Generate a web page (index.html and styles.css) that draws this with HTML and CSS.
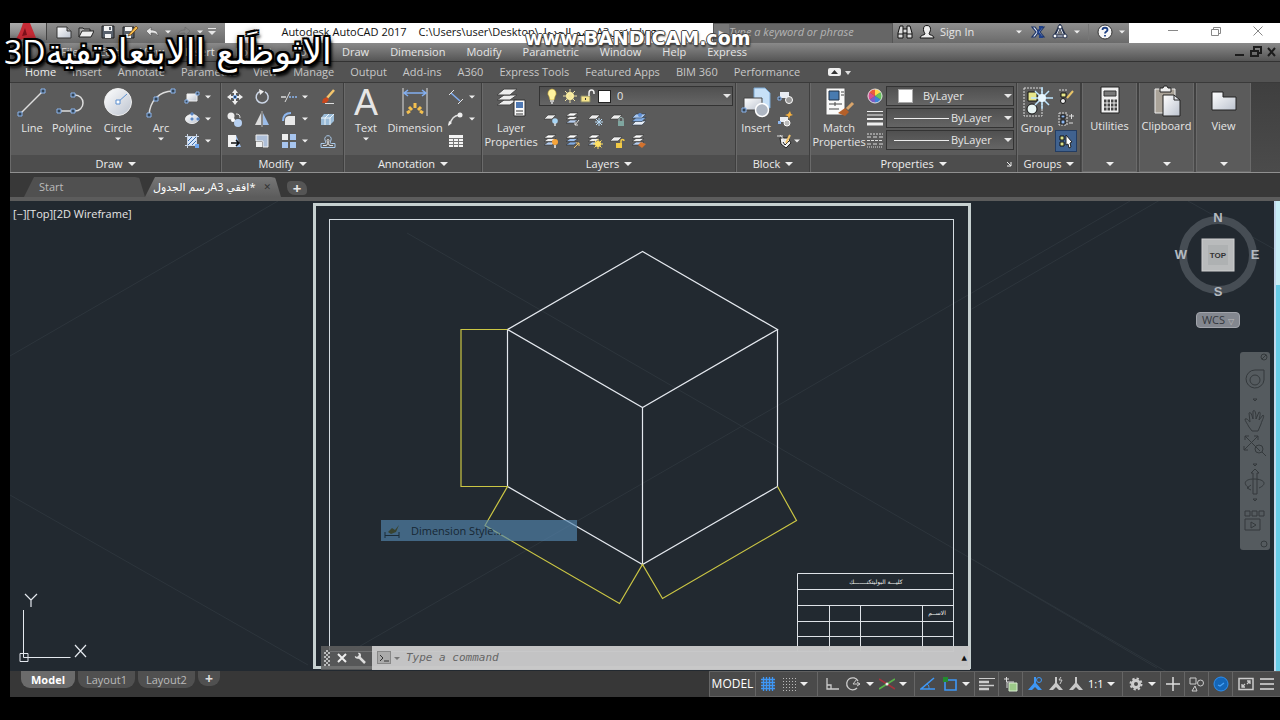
FILE: index.html
```html
<!DOCTYPE html>
<html lang="en">
<head>
<meta charset="utf-8">
<title>Autodesk AutoCAD 2017</title>
<link rel="stylesheet" href="styles.css">
</head>
<body>
<svg class="defs" aria-hidden="true">
<defs>
<linearGradient id="pale" x1="0" y1="0" x2="1" y2="1"><stop offset="0" stop-color="#fff"/><stop offset="1" stop-color="#bcc3cf"/></linearGradient>
</defs>
<symbol id="down" viewBox="0 0 8 8"><path d="M0 2h8L4 6z" fill="currentColor"/></symbol>
<!-- quick access -->
<symbol id="new" viewBox="0 0 16 16"><path d="M1 3h10l4 4v7H1z" fill="url(#pale)" stroke="#333"/><path d="M11 3v4h4" fill="#999" stroke="#333"/></symbol>
<symbol id="open" viewBox="0 0 16 16"><path d="M1 13V4h4l1 1h6v3" fill="#aaa" stroke="#222"/><path d="M1 13l3-6h12l-3 6z" fill="#eee" stroke="#222"/></symbol>
<symbol id="save" viewBox="0 0 16 16"><path d="M2 2h12v12H2z" fill="#59616c" stroke="#222"/><path d="M4 2h8v5H4zM5 10h6v4H5z" fill="#f3f3f3"/><path d="M9 3h2v3H9z" fill="#59616c"/></symbol>
<symbol id="saveas" viewBox="0 0 16 16"><path d="M1 3h11v11H1z" fill="#59616c" stroke="#222"/><path d="M3 3h7v4H3zM4 10h5v4H4z" fill="#f3f3f3"/><path d="M7 10l7-8 2 2-7 7-3 1z" fill="#f2b94a" stroke="#603a12" stroke-width=".7"/></symbol>
<symbol id="undo" viewBox="0 0 16 16"><path d="M2 7l5-4v3c5 0 7 2 7 6-2-3-4-3-7-3v3z" fill="#e8e8e8" stroke="#555" stroke-width=".6"/></symbol>
<symbol id="redo" viewBox="0 0 16 16"><path d="M14 7L9 3v3c-5 0-7 2-7 6 2-3 4-3 7-3v3z" fill="#858585" stroke="#666" stroke-width=".6"/></symbol>
<symbol id="more" viewBox="0 0 8 8"><path d="M0 0h8v1H0zM0 3h8L4 7z" fill="currentColor"/></symbol>
<!-- title bar -->
<symbol id="bino" viewBox="0 0 16 16"><path d="M3 2h3v3h4V2h3l2 7v5h-5V9H6v5H1V9z" fill="#ddd" stroke="#111"/><path d="M6 5v4M10 5v4M1 10h5M10 10h5" stroke="#111"/></symbol>
<symbol id="user" viewBox="0 0 16 16"><path d="M8 1.500c3 0 3.500 2 3.500 4S10 9 10 10c0 1 5 1 5 4H1c0-3 5-3 5-4 0-1-1.500-2-1.500-4.500S5 1.500 8 1.500z" fill="#eee" stroke="#111"/></symbol>
<symbol id="exch" viewBox="0 0 16 16"><path d="M2 3h3l3 4 3-4h3l-4 5 4 5h-3L8 9l-3 4H2l4-5z" fill="#dfe8f5" stroke="#1d3468" stroke-width="1.200"/><path d="M9 3h4M9 13h4M12 3L8 8l4 5" fill="none" stroke="#1d3f8a" stroke-width="1.800"/></symbol>
<symbol id="a360" viewBox="0 0 16 16"><path d="M8 2l5 10H3z" fill="none" stroke="#24314e" stroke-width="3"/><path d="M8 3l4 9H4z" fill="none" stroke="#e8ecf4"/><circle cx="8" cy="3" r="2" fill="#fff" stroke="#24314e"/><circle cx="3" cy="12" r="2" fill="#fff" stroke="#24314e"/><circle cx="13" cy="12" r="2" fill="#fff" stroke="#24314e"/></symbol>
<symbol id="help" viewBox="0 0 16 16"><circle cx="8" cy="8" r="7" fill="#f6f6f6" stroke="#333"/><path d="M5.500 6c0-3 5-3 5 0 0 1.500-2.500 1.500-2.500 3.500M8 11v1.500" fill="none" stroke="#1d3f82" stroke-width="1.800"/></symbol>
<!-- draw -->
<symbol id="line" viewBox="0 0 32 32"><path d="M4 28L27 5" stroke="#ddd" stroke-width="1.500"/><path d="M2 26h4v4H2zM25 3h4v4h-4z" fill="#345" stroke="#8db6ee"/></symbol>
<symbol id="pline" viewBox="0 0 32 32"><path d="M3 25h16a8 8 0 0 0 0-16" fill="none" stroke="#ddd" stroke-width="1.500"/><path d="M1 23h4v4H1zM15 23h4v4h-4zM15 7h4v4h-4z" fill="#345" stroke="#8db6ee"/></symbol>
<symbol id="circle" viewBox="0 0 32 32"><circle cx="16" cy="16" r="13.500" fill="url(#pale)" stroke="#eee"/><path d="M16 16l9-8" stroke="#5a8fd0"/><path d="M14 14h4v4h-4z" fill="#fff" stroke="#5a8fd0"/></symbol>
<symbol id="arc" viewBox="0 0 32 32"><path d="M4 29C5 15 14 5 28 5" fill="none" stroke="#ddd" stroke-width="1.500"/><path d="M2 27h4v4H2zM9 11h4v4H9zM26 3h4v4h-4z" fill="#345" stroke="#8db6ee"/></symbol>
<symbol id="rect" viewBox="0 0 16 16"><path d="M3 5h10v7H3z" fill="url(#pale)" stroke="#eee"/><path d="M1 11h3v3H1zM12 3h3v3h-3z" fill="#345" stroke="#8db6ee"/></symbol>
<symbol id="ell" viewBox="0 0 16 16"><ellipse cx="8" cy="8" rx="6.500" ry="4.500" fill="url(#pale)" stroke="#eee"/><path d="M7 7h2v2H7zM13 7h2v2h-2zM7 2h2v2H7z" fill="#345" stroke="#6c9be0"/></symbol>
<symbol id="hatch" viewBox="0 0 16 16"><path d="M4 4h8v8H4z" fill="#d7e6fb"/><path d="M4 8l4-4M4 12l8-8M8 12l4-4" stroke="#3c6fae"/><path d="M1 3.500h14M1 12.500h14M3.500 1v14M12.500 1v14" stroke="#c8d4e4"/><path d="M11 11h4v4h-4z" fill="#6ea6ef"/></symbol>
<!-- modify -->
<symbol id="move" viewBox="0 0 16 16"><path d="M8 0l3 4H9v3h3V5l4 3-4 3V9H9v3h2l-3 4-3-4h2V9H4v2L0 8l4-3v2h3V4H5z" fill="#eee"/><path d="M6.500 6.500h3v3h-3z" fill="#26476e" stroke="#8db6ee"/></symbol>
<symbol id="rotate" viewBox="0 0 16 16"><path d="M6 2.500a6 6 0 1 0 5 .3" fill="none" stroke="#ccd6e6" stroke-width="1.500"/><path d="M5 0l5 2.500L6 6z" fill="#eee"/></symbol>
<symbol id="trim" viewBox="0 0 16 16"><path d="M0 8h5" stroke="#ddd" stroke-width="1.500"/><path d="M8 8h8" stroke="#8db6ee" stroke-width="1.500" stroke-dasharray="2 1"/><path d="M4 13L9 3" stroke="#ddd"/></symbol>
<symbol id="brush" viewBox="0 0 16 16"><path d="M14 1L7 9" stroke="#f3c56c" stroke-width="2.500"/><path d="M3 10l4-2 2 3-3 3H2z" fill="#c9471c"/><path d="M5 14.500h9" stroke="#ddd"/></symbol>
<symbol id="copy" viewBox="0 0 16 16"><circle cx="4" cy="5" r="3.500" fill="#eee"/><circle cx="11" cy="12" r="4" fill="#b7d0f1"/><circle cx="6" cy="9" r="2" fill="#fff"/><path d="M9 3c3 0 4 1 4 4" fill="none" stroke="#ddd"/></symbol>
<symbol id="mirror" viewBox="0 0 16 16"><path d="M7 2v12H1z" fill="#ddd"/><path d="M9 2v12h6z" fill="#9dbde8"/><path d="M8 0v16" stroke="#ddd" stroke-width=".7"/></symbol>
<symbol id="fillet" viewBox="0 0 16 16"><path d="M4 14V9c0-3 2-4 4-4h6v9z" fill="#e8e8e8"/><path d="M2 10c0-5 3-8 8-8" fill="none" stroke="#8db6ee" stroke-width="2"/></symbol>
<symbol id="box" viewBox="0 0 16 16"><path d="M1 7l3-4h10v7l-4 4H1z" fill="#9bbcd8"/><path d="M1 7h9v7M10 7l4-4M5 7v7M5 7l4-4" fill="none" stroke="#edf5fb"/></symbol>
<symbol id="stretch" viewBox="0 0 16 16"><path d="M1 2h8v12H1z" fill="#f2f2f2"/><path d="M9 2l5 12H9z" fill="#9dc0f0"/><path d="M4 10h7M9 7l3 3-3 3" fill="none" stroke="#111" stroke-width="1.500"/></symbol>
<symbol id="scale" viewBox="0 0 16 16"><path d="M2 2h12v12H9V8H2z" fill="#aebfd8" stroke="#eee"/><path d="M2 9h6v5H2z" fill="#eee"/></symbol>
<symbol id="array" viewBox="0 0 16 16"><path d="M1 1h6v6H1z" fill="#eee"/><path d="M9 1h6v6H9zM1 9h6v6H1zM9 9h6v6H9z" fill="#a7c5ef"/></symbol>
<symbol id="offset" viewBox="0 0 16 16"><path d="M1 14.500v-4h3.500c2 0 1-2 .5-3.500a3.200 3.200 0 1 1 6 0c-.5 1.500-1.500 3.500.5 3.500H15v4z" fill="none" stroke="#a9c9ea"/><path d="M3 12.500h3c2 0 1.500-3 1-5a1 1 0 1 1 2 0c-.5 2-1 5 1 5h3" fill="none" stroke="#ddd"/></symbol>
<!-- annotation -->
<symbol id="dim" viewBox="0 0 32 32"><path d="M4 2v28M28 2v28" stroke="#ddd"/><path d="M5 7h22M9 4L5 7l4 3M23 4l4 3-4 3" fill="none" stroke="#82aef0" stroke-width="1.500"/><path d="M8 27l3-2M10 21l3 3M16 17v5M22 21l-3 3M24 27l-3-2" stroke="#f4c04f" stroke-width="3"/></symbol>
<symbol id="dlin" viewBox="0 0 16 16"><path d="M3 4l9 8" stroke="#82aef0" stroke-width="1.500"/><path d="M1 6l5-5M10 15l5-5" stroke="#e5e5e5"/></symbol>
<symbol id="leader" viewBox="0 0 16 16"><path d="M1 14C4 8 5 5 11 4" fill="none" stroke="#ddd" stroke-width="1.500"/><circle cx="12" cy="4" r="2.500" fill="#eee"/><path d="M0 15l1-5 3 2z" fill="#eee"/></symbol>
<symbol id="table" viewBox="0 0 16 16"><path d="M1 2h14v12H1z" fill="#f4f4f4"/><path d="M1 5.500h14M1 8.500h14M1 11.500h14M5.500 5v9M10.500 5v9" stroke="#777"/></symbol>
<!-- layers -->
<symbol id="layers" viewBox="0 0 32 32"><g fill="#eee" stroke="#444"><path d="M2 19l7-5h13l-7 5z"/><path d="M2 14l7-5h13l-7 5z"/><path d="M2 9l7-6h13l-7 6z"/></g><path d="M19 14h11v16H19z" fill="#fafafa" stroke="#333"/><path d="M21 16h7v6h-7z" fill="#4f79b4"/><path d="M21 25h7M21 28h7" stroke="#333"/></symbol>
<symbol id="sheet" viewBox="0 0 16 16"><path d="M1 8l4-4h8l-4 4z" fill="#eee" stroke="#333" stroke-width=".6"/></symbol>
<symbol id="stack" viewBox="0 0 16 16"><g stroke="#333" stroke-width=".6"><path d="M1 12l4-3h8l-4 3z" fill="#b7cff0"/><path d="M1 8.500l4-3h8l-4 3z" fill="#eee"/><path d="M1 5l4-3h8L9 5z" fill="#fff"/></g></symbol>
<symbol id="l1" viewBox="0 0 16 16"><use href="#sheet"/><circle cx="12" cy="10" r="2.800" fill="#a8d5f5"/><path d="M12 12v3" stroke="#ddd" stroke-width="1.500"/></symbol>
<symbol id="l2" viewBox="0 0 16 16"><use href="#stack"/><path d="M14 9l-4 5M10 11v3h3" fill="none" stroke="#ddd"/></symbol>
<symbol id="l3" viewBox="0 0 16 16"><use href="#sheet"/><path d="M12 7v8M8 11h8M9 8l6 6M15 8l-6 6" stroke="#b9dcf7"/></symbol>
<symbol id="l4" viewBox="0 0 16 16"><use href="#sheet"/><path d="M9 10h6v5H9z" fill="#7fa6a0"/><path d="M10 10V8c0-2 4-2 4 0v2" fill="none" stroke="#aac7c2"/></symbol>
<symbol id="l5" viewBox="0 0 16 16"><g stroke="#2b3a4d" stroke-width=".6"><path d="M1 14l4-4h10l-4 4z" fill="#e8eef6"/><path d="M1 10.500l4-4h10l-4 4z" fill="#82abe0"/><path d="M1 7l4-4h10l-4 4z" fill="#a9c8f0"/></g><circle cx="9" cy="4" r="2" fill="#5f8fd6"/></symbol>
<symbol id="l6" viewBox="0 0 16 16"><use href="#stack"/><circle cx="12" cy="9" r="3" fill="#f7a53b"/><path d="M12 12v3" stroke="#eee" stroke-width="1.500"/></symbol>
<symbol id="l7" viewBox="0 0 16 16"><g stroke="#333" stroke-width=".6"><path d="M1 12l4-3h8l-4 3z" fill="#82abe0"/><path d="M1 8.500l4-3h8l-4 3z" fill="#9dbfec"/><path d="M1 5l4-3h8L9 5z" fill="#fff"/></g><path d="M9 15l5-5M11 10h3v3" fill="none" stroke="#f3c56a"/></symbol>
<symbol id="l8" viewBox="0 0 16 16"><use href="#stack"/><circle cx="11" cy="11" r="3" fill="#ffe063"/><path d="M11 6v10M6 11h10M7.500 7.500l7 7M14.500 7.500l-7 7" stroke="#ffe063"/></symbol>
<symbol id="l9" viewBox="0 0 16 16"><use href="#sheet"/><path d="M7 10h6v5H7z" fill="#f1c945"/><path d="M12 10V8c0-2 3-2 3 0" fill="none" stroke="#f1c945" stroke-width="1.500"/></symbol>
<symbol id="l10" viewBox="0 0 16 16"><use href="#stack"/><path d="M7 12l3-3 5 2-4 4z" fill="#d2722e"/></symbol>
<symbol id="bulb" viewBox="0 0 16 16"><path d="M8 1a4.500 4.500 0 0 1 3 7.500L10 12H6L5 8.500A4.500 4.500 0 0 1 8 1z" fill="#fff3a0" stroke="#caa93a" stroke-width=".6"/><path d="M6 13h4M7 15h2" stroke="#ddd" stroke-width="1.500"/></symbol>
<symbol id="sun" viewBox="0 0 16 16"><circle cx="8" cy="8" r="4" fill="#fff3a0"/><path d="M8 1v14M1 8h14M3 3l10 10M13 3L3 13" stroke="#efe2a2"/></symbol>
<symbol id="unlock" viewBox="0 0 16 16"><path d="M1 8h9v6H1z" fill="#f6e48a" stroke="#886"/><path d="M9 8V5c0-4 5-4 5 0v1" fill="none" stroke="#eee" stroke-width="1.500"/><path d="M5 10h1v2H5z" fill="#333"/></symbol>
<!-- block, properties -->
<symbol id="insert" viewBox="0 0 32 32"><path d="M14 2h11l5 5v15H14z" fill="#c7e0f7" stroke="#7ca9d4"/><path d="M4 12h18v12H4z" fill="url(#pale)" stroke="#444"/><circle cx="22" cy="24" r="6.500" fill="#aeb6c2" stroke="#fff" stroke-width="1.500"/><path d="M2 22h4v4H2z" fill="#345" stroke="#8db6ee"/></symbol>
<symbol id="b1" viewBox="0 0 16 16"><path d="M3 3h9v6H3z" fill="#e8ecf2"/><circle cx="12" cy="11" r="3.500" fill="#999" stroke="#fff"/><path d="M1 8h3v3H1z" fill="#345" stroke="#8db6ee"/></symbol>
<symbol id="b2" viewBox="0 0 16 16"><path d="M3 6h8v5H3z" fill="#e8ecf2"/><circle cx="10" cy="12" r="3" fill="#bbb" stroke="#fff"/><path d="M1 10h3v3H1z" fill="#8db6ee"/><path d="M13 0l1 3 2 1-3 1-1 3-1-3-3-1 3-1z" fill="#f7b23f"/></symbol>
<symbol id="b3" viewBox="0 0 16 16"><path d="M3 5h8l3 5-5 5-5-4z" fill="#eee" stroke="#222"/><path d="M0 3h6M3 2l5 6" stroke="#ddd"/><path d="M6 9l2 3 4-4" fill="none" stroke="#222"/><path d="M9 10l4-8" stroke="#f2c46c" stroke-width="2"/></symbol>
<symbol id="match" viewBox="0 0 32 32"><path d="M3 2h19v27H3z" fill="#fafafa" stroke="#555"/><path d="M6 5h10v9H6z" fill="#487bb0" stroke="#234"/><path d="M18 6h3M18 9h3M6 18h13M6 23h10M12 16v4" stroke="#444"/><path d="M30 17l-6 6" stroke="#d9a56b" stroke-width="3"/><path d="M15 27l7-5 4 4-4 4z" fill="#b4602a"/></symbol>
<symbol id="wheel" viewBox="0 0 16 16"><path d="M8 8V1A7 7 0 0 1 14 4z" fill="#ffd84a"/><path d="M8 8l6-4a7 7 0 0 1 0 8z" fill="#67c45c"/><path d="M8 8l6 4a7 7 0 0 1-6 3z" fill="#3d83d8"/><path d="M8 8v7a7 7 0 0 1-6-3z" fill="#7a5dc7"/><path d="M8 8l-6 4a7 7 0 0 1 0-8z" fill="#d84e90"/><path d="M8 8L2 4a7 7 0 0 1 6-3z" fill="#ec5a3d"/><circle cx="8" cy="8" r="7" fill="none" stroke="#ddd"/></symbol>
<symbol id="weights" viewBox="0 0 16 16"><path d="M0 1.500h16M0 5h16" stroke="#eee"/><path d="M0 9h16" stroke="#eee" stroke-width="2"/><path d="M0 14h16" stroke="#eee" stroke-width="3"/></symbol>
<symbol id="types" viewBox="0 0 16 16"><path d="M0 2h16" stroke="#ddd" stroke-dasharray="2 1"/><path d="M0 5h16M0 12h16" stroke="#ddd" stroke-dasharray="4 2"/><path d="M0 8.500h16" stroke="#ddd" stroke-dasharray="3 1"/><path d="M0 15h16" stroke="#ddd" stroke-dasharray="1 1"/></symbol>
<!-- groups -->
<symbol id="group" viewBox="0 0 32 32"><path d="M3 2h18v28H3z" fill="none" stroke="#ddd" stroke-dasharray="2 1"/><path d="M7 6h9v9H7z" fill="#e6e68a" stroke="#111"/><circle cx="11" cy="23" r="5" fill="#e9f5f4" stroke="#111"/><path d="M21 1v22M10 12h22M14 5l14 14M28 5L14 19" stroke="#bfe6ff" stroke-width="1.500"/><circle cx="21" cy="12" r="4" fill="#e8f7ff"/></symbol>
<symbol id="g1" viewBox="0 0 16 16"><path d="M1 1h9" stroke="#ddd" stroke-dasharray="2 1"/><path d="M3 4h5v4H3z" fill="#e6e68a" stroke="#111"/><circle cx="5" cy="12" r="2.500" fill="#eee" stroke="#111"/><path d="M15 2L9 9" stroke="#e8c468" stroke-width="2"/></symbol>
<symbol id="g2" viewBox="0 0 16 16"><path d="M1 2h8v12H1z" fill="none" stroke="#ddd" stroke-dasharray="2 1"/><path d="M3 4h4v3H3zM3 9h4v4H3z" fill="#8db6ee" stroke="#111"/><path d="M11 5h5M13.500 3v5M11 12h4" stroke="#ddd"/></symbol>
<symbol id="g3" viewBox="0 0 16 16"><path d="M2 3h4v4H2zM2 9h4v4H2z" fill="#d8e08c" stroke="#111"/><path d="M8 2l6 7-2 1 1 4-2 1-1-4-2 1z" fill="#fff" stroke="#222"/></symbol>
<symbol id="calc" viewBox="0 0 32 32"><path d="M7 2h18v26H7z" fill="#f0f0f0" stroke="#222"/><path d="M10 6h12v5H10z" fill="#777" stroke="#333"/><path d="M10 16h13M10 20h13M10 24h13" stroke="#444" stroke-width="3" stroke-dasharray="2.500 1"/></symbol>
<symbol id="clip" viewBox="0 0 32 32"><path d="M4 4h20v24H4z" fill="#aaa398" stroke="#eee"/><path d="M9 3h3l1-2h3l1 2h3v4H9z" fill="#eee" stroke="#222"/><path d="M12 10h11l6 5v16H12z" fill="url(#pale)" stroke="#222"/><path d="M23 10v5h6" fill="none" stroke="#222"/></symbol>
<symbol id="view" viewBox="0 0 32 32"><path d="M4 7h11v5h13v13H4z" fill="url(#pale)" stroke="#222"/></symbol>
<!-- status bar -->
<symbol id="grid" viewBox="0 0 16 16"><path d="M1 3.500h14M1 6.500h14M1 9.500h14M1 12.500h14M3.500 1v14M6.500 1v14M9.500 1v14M12.500 1v14" stroke="#3e97f5" stroke-width="1.300"/></symbol>
<symbol id="dots" viewBox="0 0 16 16"><path d="M2 2.500h13M2 5.500h13M2 8.500h13M2 11.500h13M2 14.500h13" stroke="#bbb" stroke-dasharray="1 2"/></symbol>
<symbol id="ortho" viewBox="0 0 16 16"><path d="M3 2v11h12M3 9h4v4" fill="none" stroke="#ccc" stroke-width="1.300"/></symbol>
<symbol id="polar" viewBox="0 0 16 16"><path d="M12 12a6 6 0 1 1 1-7" fill="none" stroke="#ccc" stroke-width="1.300"/><path d="M8 8h7M8 8l4-5M12 6l3 2-3 2" fill="none" stroke="#ccc"/></symbol>
<symbol id="iso" viewBox="0 0 16 16"><path d="M0 3l16 10" stroke="#a3333c" stroke-width="1.600"/><path d="M0 13L16 3" stroke="#58b247" stroke-width="1.600"/><circle cx="8" cy="8" r="1.500" fill="#eee"/></symbol>
<symbol id="track" viewBox="0 0 16 16"><path d="M14 2L1 13h14" fill="none" stroke="#3e97f5" stroke-width="1.600"/><path d="M7 8c2 1 2 3 2 5" stroke="#3e97f5" fill="none"/></symbol>
<symbol id="snap" viewBox="0 0 16 16"><path d="M3 4h11v10H3z" fill="none" stroke="#3e97f5" stroke-width="1.600"/><path d="M1 1h5v5H1z" fill="#238c2e"/></symbol>
<symbol id="lwt" viewBox="0 0 16 16"><path d="M0 2.500h16" stroke="#ccc"/><path d="M0 6h10M0 13h10" stroke="#ccc" stroke-width="2.500"/><path d="M0 9.500h15" stroke="#ccc" stroke-width="1.500"/></symbol>
<symbol id="cycle" viewBox="0 0 16 16"><path d="M6 7h8v8H6z" fill="#9cc989" stroke="#d8ecd0"/><path d="M1 3h5M3.500 1v5M4 12V6h7" stroke="#ddd" fill="none"/></symbol>
<symbol id="anno" viewBox="0 0 16 16"><path d="M7 1h2v6l6 7H11l-3-3-3 3H1l6-7z" fill="currentColor"/></symbol>
<symbol id="anno1" viewBox="0 0 16 16"><use href="#anno"/><circle cx="12" cy="4" r="2.500" fill="none" stroke="currentColor"/></symbol>
<symbol id="anno2" viewBox="0 0 16 16"><use href="#anno"/><path d="M13 1l-2 3h3l-2 4" fill="none" stroke="currentColor"/></symbol>
<symbol id="gear" viewBox="0 0 16 16"><circle cx="8" cy="8" r="3.500" fill="none" stroke="#ccc" stroke-width="3"/><circle cx="8" cy="8" r="5.500" fill="none" stroke="#ccc" stroke-width="2" stroke-dasharray="2.300 2"/></symbol>
<symbol id="plus" viewBox="0 0 16 16"><path d="M8 1v14M1 8h14" stroke="#ddd" stroke-width="1.500"/></symbol>
<symbol id="shapes" viewBox="0 0 16 16"><path d="M1 2h6v6H1zM8 15H3l3-5z" fill="none" stroke="#ccc"/><circle cx="11.500" cy="7" r="3" fill="none" stroke="#ccc"/></symbol>
<symbol id="accel" viewBox="0 0 16 16"><circle cx="8" cy="8" r="7" fill="#1466b8" stroke="#2c8ef0"/><path d="M5 9l2 1 4-3" fill="none" stroke="#49a5fa" stroke-width="1.200"/></symbol>
<symbol id="full" viewBox="0 0 16 16"><path d="M1 2.500h14v11H1z" fill="none" stroke="#ccc" stroke-width="1.500"/><path d="M4 11l3-3M4 8v3h3M9 8l3-3M9 5h3v3" fill="none" stroke="#ccc" stroke-width="1.300"/></symbol>
<symbol id="burger" viewBox="0 0 16 16"><path d="M1 3h14M1 8h14M1 13h14" stroke="#ddd" stroke-width="1.500"/></symbol>
</svg>

<div class="app">
<header class="titlebar">
  <div class="quick">
    <button class="logo" aria-label="Application menu"><svg viewBox="0 0 32 20"><path d="M3 20C9 13 11 6 13 0h7l8 20h-7l-2-5-7 1-3 4z" fill="#c62a35"/><path d="M12 13l5-1-2-7z" fill="#7c111b"/></svg></button>
    <button aria-label="New"><svg class="s"><use href="#new"/></svg></button>
    <button aria-label="Open"><svg class="s"><use href="#open"/></svg></button>
    <button aria-label="Save"><svg class="s"><use href="#save"/></svg></button>
    <button aria-label="Save as"><svg class="s"><use href="#saveas"/></svg></button>
    <button aria-label="Undo"><svg class="s"><use href="#undo"/></svg></button>
    <svg class="d"><use href="#down"/></svg>
    <button aria-label="Redo"><svg class="s"><use href="#redo"/></svg></button>
    <svg class="d"><use href="#down"/></svg>
    <button aria-label="Customize"><svg class="m"><use href="#more"/></svg></button>
  </div>
  <div class="doc-title"><span>Autodesk AutoCAD 2017</span><span>C:\Users\user\Desktop\رسم الجدولA3افقي.dwg</span></div>
  <div class="search"><button aria-label="Expand search">▸</button><input type="text" aria-label="Search" placeholder="Type a keyword or phrase"></div>
  <div class="account">
    <button aria-label="Find"><svg class="s"><use href="#bino"/></svg></button>
    <button class="sign"><svg class="s"><use href="#user"/></svg>Sign In<svg class="d"><use href="#down"/></svg></button>
    <button aria-label="Exchange"><svg class="s"><use href="#exch"/></svg></button>
    <button class="pair" aria-label="A360"><svg class="s"><use href="#a360"/></svg><svg class="d"><use href="#down"/></svg></button>
    <button class="pair helpb" aria-label="Help"><svg class="s"><use href="#help"/></svg><svg class="d"><use href="#down"/></svg></button>
  </div>
  <div class="winctl">
    <button aria-label="Minimize"><svg viewBox="0 0 12 12"><path d="M1 5.500h10"/></svg></button>
    <button aria-label="Restore"><svg viewBox="0 0 12 12"><path d="M1.500 4.500h7v6h-7zM3.500 4.500v-2h7v6h-2"/></svg></button>
    <button aria-label="Close"><svg viewBox="0 0 12 12"><path d="M1.500 1.500l9 9M10.500 1.500l-9 9"/></svg></button>
  </div>
</header>

<nav class="menubar">
  <button>File</button><button>Edit</button><button>View</button><button>Insert</button><button>Format</button><button>Tools</button><button>Draw</button><button>Dimension</button><button>Modify</button><button>Parametric</button><button>Window</button><button>Help</button><button>Express</button>
  <div class="docctl">
    <button aria-label="Minimize drawing"><svg viewBox="0 0 12 12"><path d="M1 9h9"/></svg></button>
    <button aria-label="Restore drawing"><svg viewBox="0 0 12 12"><path d="M1 5h7v5H1zM4 4V1h7v6H9"/></svg></button>
    <button aria-label="Close drawing"><svg viewBox="0 0 12 12"><path d="M2 2l7 8M9 2l-7 8"/></svg></button>
  </div>
</nav>

<nav class="tabs">
  <button class="on">Home</button><button>Insert</button><button>Annotate</button><button>Parametric</button><button>View</button><button>Manage</button><button>Output</button><button>Add-ins</button><button>A360</button><button>Express Tools</button><button>Featured Apps</button><button>BIM 360</button><button>Performance</button>
  <button class="collapse" aria-label="Minimize ribbon"><svg viewBox="0 0 24 8"><rect width="13" height="8" rx="2" fill="#eee"/><path d="M3 6h7L6.500 2z" fill="#333"/><path d="M17 3h6l-3 4z" fill="#ddd"/></svg></button>
</nav>

<main class="ribbon">
  <section class="panel draw">
    <div class="body">
      <button class="big w42"><svg><use href="#line"/></svg>Line</button>
      <button class="big w38"><svg><use href="#pline"/></svg>Polyline</button>
      <button class="big w54"><svg><use href="#circle"/></svg>Circle<svg class="d"><use href="#down"/></svg></button>
      <button class="big w32"><svg><use href="#arc"/></svg>Arc<svg class="d"><use href="#down"/></svg></button>
      <div class="smalls one">
        <button aria-label="Rectangle"><svg class="s"><use href="#rect"/></svg><svg class="d"><use href="#down"/></svg></button>
        <button aria-label="Ellipse"><svg class="s"><use href="#ell"/></svg><svg class="d"><use href="#down"/></svg></button>
        <button aria-label="Hatch"><svg class="s"><use href="#hatch"/></svg><svg class="d"><use href="#down"/></svg></button>
      </div>
    </div>
    <button class="ptitle">Draw<svg><use href="#down"/></svg></button>
  </section>
  <section class="panel modify">
    <div class="body">
      <div class="smalls four">
        <button aria-label="Move"><svg class="s"><use href="#move"/></svg></button>
        <button aria-label="Rotate"><svg class="s"><use href="#rotate"/></svg></button>
        <button aria-label="Trim"><svg class="s"><use href="#trim"/></svg><svg class="d"><use href="#down"/></svg></button>
        <button aria-label="Erase"><svg class="s"><use href="#brush"/></svg></button>
        <button aria-label="Copy"><svg class="s"><use href="#copy"/></svg></button>
        <button aria-label="Mirror"><svg class="s"><use href="#mirror"/></svg></button>
        <button aria-label="Fillet"><svg class="s"><use href="#fillet"/></svg><svg class="d"><use href="#down"/></svg></button>
        <button aria-label="Explode"><svg class="s"><use href="#box"/></svg></button>
        <button aria-label="Stretch"><svg class="s"><use href="#stretch"/></svg></button>
        <button aria-label="Scale"><svg class="s"><use href="#scale"/></svg></button>
        <button aria-label="Array"><svg class="s"><use href="#array"/></svg><svg class="d"><use href="#down"/></svg></button>
        <button aria-label="Offset"><svg class="s"><use href="#offset"/></svg></button>
      </div>
    </div>
    <button class="ptitle">Modify<svg><use href="#down"/></svg></button>
  </section>
  <section class="panel annot">
    <div class="body">
      <button class="big w42"><span class="glyph">A</span>Text<svg class="d"><use href="#down"/></svg></button>
      <button class="big w56"><svg><use href="#dim"/></svg>Dimension</button>
      <div class="smalls one">
        <button aria-label="Linear"><svg class="s"><use href="#dlin"/></svg><svg class="d"><use href="#down"/></svg></button>
        <button aria-label="Leader"><svg class="s"><use href="#leader"/></svg><svg class="d"><use href="#down"/></svg></button>
        <button aria-label="Table"><svg class="s"><use href="#table"/></svg></button>
      </div>
    </div>
    <button class="ptitle">Annotation<svg><use href="#down"/></svg></button>
  </section>
  <section class="panel layer">
    <div class="body">
      <button class="big w56"><svg><use href="#layers"/></svg>Layer<br>Properties</button>
      <div class="stackcol">
        <div class="combo"><svg class="s"><use href="#bulb"/></svg><svg class="s"><use href="#sun"/></svg><svg class="s"><use href="#unlock"/></svg><i class="swatch"></i><select aria-label="Layer"><option>0</option></select><svg class="ca"><use href="#down"/></svg></div>
        <div class="smalls five">
          <button aria-label="Layer off"><svg class="s"><use href="#l1"/></svg></button>
          <button aria-label="Isolate"><svg class="s"><use href="#l2"/></svg></button>
          <button aria-label="Freeze"><svg class="s"><use href="#l3"/></svg></button>
          <button aria-label="Lock"><svg class="s"><use href="#l4"/></svg></button>
          <button aria-label="Make current"><svg class="s"><use href="#l5"/></svg></button>
          <button aria-label="Layers on"><svg class="s"><use href="#l6"/></svg></button>
          <button aria-label="Unisolate"><svg class="s"><use href="#l7"/></svg></button>
          <button aria-label="Thaw"><svg class="s"><use href="#l8"/></svg></button>
          <button aria-label="Unlock"><svg class="s"><use href="#l9"/></svg></button>
          <button aria-label="Match layer"><svg class="s"><use href="#l10"/></svg></button>
        </div>
      </div>
    </div>
    <button class="ptitle">Layers<svg><use href="#down"/></svg></button>
  </section>
  <section class="panel block">
    <div class="body">
      <button class="big w36"><svg><use href="#insert"/></svg>Insert</button>
      <div class="smalls one">
        <button aria-label="Create block"><svg class="s"><use href="#b1"/></svg></button>
        <button aria-label="Block editor"><svg class="s"><use href="#b2"/></svg></button>
        <button aria-label="Attributes"><svg class="s"><use href="#b3"/></svg><svg class="d"><use href="#down"/></svg></button>
      </div>
    </div>
    <button class="ptitle">Block<svg><use href="#down"/></svg></button>
  </section>
  <section class="panel props">
    <div class="body">
      <button class="big w56"><svg><use href="#match"/></svg>Match<br>Properties</button>
      <div class="proprows">
        <svg class="s"><use href="#wheel"/></svg><div class="combo"><i class="swatch big-sw"></i><select aria-label="Color"><option>ByLayer</option></select><svg class="ca"><use href="#down"/></svg></div>
        <svg class="s"><use href="#weights"/></svg><div class="combo"><i class="rule"></i><select aria-label="Lineweight"><option>ByLayer</option></select><svg class="ca"><use href="#down"/></svg></div>
        <svg class="s"><use href="#types"/></svg><div class="combo"><i class="rule"></i><select aria-label="Linetype"><option>ByLayer</option></select><svg class="ca"><use href="#down"/></svg></div>
      </div>
    </div>
    <div class="ptitle"><button>Properties<svg><use href="#down"/></svg></button><button class="launch" aria-label="Properties dialog"><svg viewBox="0 0 8 8"><path d="M2 2l4 4M6 2v4H2" fill="none" stroke="#eee"/></svg></button></div>
  </section>
  <section class="panel groups">
    <div class="body">
      <button class="big w36"><svg><use href="#group"/></svg>Group</button>
      <div class="smalls one">
        <button aria-label="Edit group"><svg class="s"><use href="#g1"/></svg></button>
        <button aria-label="Ungroup"><svg class="s"><use href="#g2"/></svg></button>
        <button class="active" aria-label="Group selection"><svg class="s"><use href="#g3"/></svg></button>
      </div>
    </div>
    <button class="ptitle">Groups<svg><use href="#down"/></svg></button>
  </section>
  <button class="solo"><svg class="l"><use href="#calc"/></svg>Utilities<svg class="d"><use href="#down"/></svg></button>
  <button class="solo"><svg class="l"><use href="#clip"/></svg>Clipboard<svg class="d"><use href="#down"/></svg></button>
  <button class="solo"><svg class="l"><use href="#view"/></svg>View<svg class="d"><use href="#down"/></svg></button>
</main>

<nav class="files">
  <button class="ftab start">Start</button>
  <button class="ftab cur"><span>رسم الجدولA3 افقي*</span><span class="x">✕</span></button>
  <button class="fadd" aria-label="New drawing">+</button>
</nav>

<div class="work">
  <div class="canvas">
    <svg class="drawing" viewBox="10 201 1264 470" fill="none">
      <g stroke="#2d353c">
        <path d="M278 201L10 356M1188 201l86 48M10 495l298 170M407 233l563 325 187 110M355 649l422-243 353-205M970 310l304-176M970 558l304 176"/>
      </g>
      <rect x="314.500" y="204.500" width="655" height="463" stroke="#c6d0d0" stroke-width="3"/>
      <rect x="329.500" y="219.500" width="624" height="432" stroke="#d5dce2"/>
      <g stroke="#e4e8ee" stroke-width="1.200">
        <path d="M642.500 251.500l-135 78 135 78 135-78z"/>
        <path d="M507.500 329.500v157l135 78 135-78v-157M642.500 407.500v157"/>
      </g>
      <g stroke="#cbc644" stroke-width="1.200">
        <path d="M507.500 329.500h-46.500v157h46.500l-22.500 39 134.500 78 23-39 20 34 134-78-19-34"/>
      </g>
      <path d="M797.500 652v-78.500h156M797.500 589.500h156M797.500 605.500h156M797.500 621.500h156M797.500 636.500h156M829.500 605v47M860.500 605v47M922.500 605v47" stroke="#dfe3e8"/>
      <text x="876" y="584" class="tiny" text-anchor="middle">كليـــة البوليتكنـــــــك</text>
      <text x="937" y="615" class="tiny" text-anchor="middle">الاســم</text>
      <path d="M23.500 610v47.500h47M20 653.500h8v8h-8z" stroke="#e4e8ee"/>
      <path d="M25 594l6 6v7M37 594l-6 6M75 645l11 12M86 645l-11 12" stroke="#e4e8ee" stroke-width="1.200"/>
    </svg>
    <div class="vp">[−][Top][2D Wireframe]</div>
    <button class="ctx"><svg viewBox="0 0 16 16"><path d="M1 9v6M15 9v6M1 12.500h14" stroke="#1b2c38"/><path d="M4 9l4-4 3 2 4-5-3 7-5 2z" fill="#39432f"/></svg>Dimension Style...</button>
    <div class="cube">
      <svg viewBox="0 0 90 90"><circle cx="45" cy="45" r="35" fill="none" stroke="#464d54" stroke-width="8"/><rect x="29" y="29" width="32" height="32" fill="#b9bbbc" stroke="#cfd0d0"/><rect x="35" y="35" width="20" height="20" fill="#aeb1b2"/><g class="compass"><text x="45" y="12">N</text><text x="45" y="86">S</text><text x="8" y="49">W</text><text x="82" y="49">E</text></g><text class="top" x="45" y="48">TOP</text></svg>
      <button class="wcs">WCS <span>▽</span></button>
    </div>
    <div class="navbar">
      <svg viewBox="0 0 30 198" fill="none" stroke="#34393c"><circle cx="24" cy="5" r="3"/><path d="M22 7l4-4M15 18h9v10a9 9 0 1 1-9-10z"/><circle cx="15" cy="28" r="5"/><path d="M13 47h4l-2 2z"/><path d="M9 75c-2-4-4-6-4-8 3-1 4 3 5 3l-1-9c2-2 3 3 4 6V59c2-2 3 2 3 8l3-7c2 0 1 4 0 8l4-5c2 1-1 5-2 9l-3 7h-6z"/><path d="M5 84l15 15M18 84L4 98M5 88v-4h4M14 84h4v4M4 94v4h4"/><circle cx="19" cy="97" r="4"/><path d="M22 100l4 4M13 112h4l-2 2zM13 142V121h-2l4-4 4 4h-2v21z"/><path d="M9 136c-6-4-5-9 5-9s14 5 5 9M11 133l-4 3 4 2M13 147h4l-2 2zM5 159h5v5H5zM12 159h5v5h-5zM19 159h5v5h-5zM5 167h15v11H5zM11 170l5 3-5 3z"/><circle cx="24" cy="192" r="3"/></svg>
    </div>
    <div class="cmd">
      <span class="grip"></span>
      <button aria-label="Close command line"><svg viewBox="0 0 12 12"><path d="M2 2l8 8M10 2l-8 8" stroke="#eee" stroke-width="2"/></svg></button>
      <button aria-label="Customize"><svg viewBox="0 0 12 12"><path d="M11 11L5 5" stroke="#ddd" stroke-width="2.500"/><path d="M4 1c3-1 4 3 2 5S0 6 1 4l2 1 2-2z" fill="#ddd"/></svg></button>
      <div class="field">
        <svg viewBox="0 0 24 14"><rect x=".5" y=".5" width="13" height="12" fill="#aaa" stroke="#888"/><path d="M3 4l3 3-3 3M7 10h5" fill="none" stroke="#333"/><path d="M17 6h6l-3 3z" fill="#777"/></svg>
        <input type="text" aria-label="Command" placeholder="Type a command">
        <button aria-label="Command history">▲</button>
      </div>
    </div>
  </div>
  <div class="edge"></div>
</div>

<footer class="status">
  <div class="layouts">
    <button class="on">Model</button><button>Layout1</button><button>Layout2</button><button class="add" aria-label="New layout">+</button>
  </div>
  <div class="tools">
    <button class="model">MODEL</button>
    <div class="w62"><svg class="s"><use href="#grid"/></svg><svg class="s"><use href="#dots"/></svg><svg class="d"><use href="#down"/></svg></div>
    <div class="w96"><svg class="s"><use href="#ortho"/></svg><svg class="s"><use href="#polar"/></svg><svg class="d"><use href="#down"/></svg><svg class="s"><use href="#iso"/></svg><svg class="d"><use href="#down"/></svg></div>
    <div class="w60"><svg class="s"><use href="#track"/></svg><svg class="s"><use href="#snap"/></svg><svg class="d"><use href="#down"/></svg></div>
    <button class="w24" aria-label="Lineweight"><svg class="s"><use href="#lwt"/></svg></button>
    <button class="w24" aria-label="Cycling"><svg class="s"><use href="#cycle"/></svg></button>
    <div class="w100"><svg class="s blue"><use href="#anno1"/></svg><svg class="s"><use href="#anno2"/></svg><svg class="s"><use href="#anno"/></svg><span>1:1</span><svg class="d"><use href="#down"/></svg></div>
    <div class="w38"><svg class="s"><use href="#gear"/></svg><svg class="d"><use href="#down"/></svg></div>
    <button class="w24" aria-label="Monitor"><svg class="s"><use href="#plus"/></svg></button>
    <button class="w24" aria-label="Isolate objects"><svg class="s"><use href="#shapes"/></svg></button>
    <button class="w24" aria-label="Hardware acceleration"><svg class="s"><use href="#accel"/></svg></button>
    <div class="w48"><svg class="s"><use href="#full"/></svg><svg class="s"><use href="#burger"/></svg></div>
  </div>
</footer>
</div>
<div class="caption" dir="rtl" lang="ar">الاثوظَلع االابنعادتفية<span>3D</span></div>
<div class="watermark">www.<b>BANDICAM</b>.com</div>
</body>
</html>
```
FILE: styles.css
```css
* { box-sizing: border-box; }
body { margin: 0; background: #000; color: #e6e6e6; font: 11px/14px "Open Sans", "Noto Sans", "DejaVu Sans", sans-serif; position: relative; }
button, input, select { font: inherit; color: inherit; background: none; border: 0; padding: 0; margin: 0; }
button { white-space: nowrap; }
svg { display: block; flex: none; }
.defs { position: absolute; width: 0; height: 0; }
.s { width: 16px; height: 16px; }
.d { width: 6px; height: 6px; color: #eee; }
.l { width: 32px; height: 32px; }
.app { min-height: 100vh; padding: 23px 0 23px 10px; display: flex; flex-direction: column; }

.titlebar { display: flex; height: 20px; background: #fff; }
.titlebar > * { padding-bottom: 3px; }
.quick { flex: 0 0 215px; display: flex; align-items: center; gap: 6px; background: linear-gradient(#8e8e8e, #6a6a6a); }
.quick .logo { width: 37px; height: 17px; border-right: 1px solid #444; margin-right: 3px; overflow: hidden; background: linear-gradient(#aaa, #777); }
.logo svg { width: 32px; height: 20px; }
.quick .d { margin: 0 -1px; }
.m { width: 8px; height: 8px; }
.doc-title { flex: 1; display: flex; justify-content: center; align-items: center; gap: 12px; color: #111; white-space: pre; }
.doc-title, .search { overflow: hidden; }
.search { flex: 0 0 180px; display: flex; align-items: center; background: #666; border: 1px solid #555; border-bottom: 0; }
.search button { width: 15px; align-self: stretch; background: #777; }
.search input { flex: 1; min-width: 0; font-style: italic; }
.search input::placeholder { color: #b4b4b4; opacity: 1; }
.account { flex: 0 0 236px; display: flex; align-items: center; padding-left: 4px; gap: 6px; background: linear-gradient(#8e8e8e, #6a6a6a); }
.sign { flex: 1; display: flex; align-items: center; gap: 5px; margin-right: 2px; }
.sign .d { margin-left: auto; }
.pair { display: flex; align-items: center; gap: 6px; }
.helpb { border-left: 1px solid #777; padding: 0 4px 0 8px; margin-left: 2px; }
.winctl { flex: 0 0 151px; display: flex; justify-content: space-between; align-items: center; padding: 0 16px 4px 38px; background: #fff; }
.winctl svg { width: 12px; height: 12px; fill: none; stroke: #888; }

.menubar { height: 19px; display: flex; align-items: center; gap: 21px; padding-left: 51px; background: linear-gradient(#8a8a8a, #555); border-bottom: 1px solid #333; }
.docctl { margin-left: auto; display: flex; gap: 4px; padding-right: 2px; }
.docctl svg { width: 12px; height: 12px; fill: none; stroke: #1c1c1c; stroke-width: 2; }

.tabs { height: 20px; display: flex; align-items: center; gap: 16px; padding-left: 15px; background: #535353; color: #c8c8c8; }
.tabs .on { color: #eee; }
.collapse { margin-left: 12px; }
.collapse svg { width: 24px; height: 8px; }

.ribbon { height: 91px; display: flex; background: linear-gradient(#3f3f3f, #4b4b4b); border-top: 1px solid #3a3a3a; border-bottom: 1px solid #909090; }
.panel { flex: none; display: flex; flex-direction: column; background: #5b5b5b; border-right: 1px solid #3f3f3f; border-left: 1px solid #6a6a6a; }
.body { flex: 1; display: flex; padding-top: 3px; }
.ptitle { height: 17px; display: flex; align-items: center; justify-content: center; gap: 5px; background: #4d4d4d; color: #eee; }
.ptitle svg { width: 8px; height: 8px; }
.draw { width: 211px; } .modify { width: 123px; } .annot { width: 138px; } .layer { width: 254px; } .block { width: 74px; } .props { width: 207px; } .groups { width: 64px; }
.big { display: flex; flex-direction: column; align-items: center; line-height: 14px; }
.big > svg:first-child { width: 32px; height: 32px; margin-bottom: 3px; }
.big > .d { margin-top: 1px; }
.glyph { font: 36px/34px "Liberation Sans", sans-serif; height: 35px; }
.w32 { width: 32px; } .w36 { width: 36px; } .w38 { width: 38px; } .w42 { width: 42px; } .w54 { width: 54px; } .w56 { width: 56px; }
.smalls { display: grid; grid-auto-rows: 22px; }
.smalls button { display: flex; align-items: center; gap: 5px; padding-left: 3px; }
.one { grid-template-columns: 28px; }
.draw .one { margin-left: 4px; }
.annot .one { margin-left: 2px; }
.four { grid-template-columns: 27px 27px 39px 27px; padding-left: 2px; }
.five { grid-template-columns: repeat(5, 22px); padding-left: 1px; }
.stackcol { flex: 1; padding-right: 2px; }
.combo { display: flex; align-items: center; gap: 2px; height: 20px; margin: 0 0 2px; padding: 0 1px 0 4px; background: linear-gradient(#505050, #656565); border: 1px solid #333; }
.combo select { appearance: none; flex: 1; min-width: 0; padding-left: 4px; outline: 0; }
.ca { width: 8px; height: 8px; }
.swatch { width: 13px; height: 13px; background: #fff; border: 1px solid #222; }
.big-sw { width: 15px; height: 14px; margin: 0 4px 0 7px; border-color: #aaa; }
.rule { width: 55px; height: 1px; margin-left: 3px; background: #eee; }
.proprows { flex: 1; display: grid; grid-template-columns: 16px 1fr; column-gap: 3px; grid-auto-rows: 22px; padding-right: 2px; }
.proprows .s { margin-top: 2px; }
.combo .rule + select { padding-left: 0; }
.block .big, .groups .big { margin-left: 1px; }
.block .d { margin-left: -4px; }
.props .ptitle { position: relative; }
.ptitle button { display: flex; align-items: center; gap: 5px; }
.ptitle .launch { position: absolute; right: 3px; }
.groups .one { grid-template-columns: 22px; }
.active { background: #40628f; box-shadow: inset 0 0 0 1px #243d62; }
.solo { width: 55px; margin-left: 1px; display: flex; flex-direction: column; align-items: center; padding: 2px 0 3px; background: #5b5b5b; border: 1px solid #6a6a6a; border-top: 0; }
.solo + .solo { margin-left: 2px; }
.solo .l { margin-bottom: 2px; }
.solo .d { margin-top: auto; width: 8px; height: 8px; }

.files { height: 28px; display: flex; align-items: flex-end; padding: 0 0 4px 14px; background: #383838; box-shadow: inset 0 -4px #5c5c5c; }
.ftab { height: 20px; background: #505050; border-radius: 10px 10px 0 0; color: #bbb; text-align: left; clip-path: polygon(10px 0, calc(100% - 6px) 0, 100% 100%, 0 100%); }
.start { width: 121px; padding-left: 15px; }
.cur { width: 136px; display: flex; align-items: center; justify-content: center; gap: 8px; background: linear-gradient(#777, #5c5c5c); color: #fff; padding: 0 2px 0 0; }
.x { color: #333; font-size: 9px; }
.fadd { width: 20px; height: 14px; margin: 0 0 2px 6px; line-height: 12px; font-size: 15px; font-weight: 700; background: #555; border-radius: 4px 8px 4px 8px; }

.work { flex: 1; display: flex; min-height: 200px; }
.canvas { flex: 1; position: relative; background: #222930; overflow: hidden; }
.drawing { position: absolute; inset: 0; width: 100%; height: 100%; }
.tiny { font: 6px "DejaVu Sans", sans-serif; fill: #eee; }
.vp { position: absolute; left: 3px; top: 6px; }
.edge { flex: 0 0 6px; border-left: 2px solid #c3d8ec; background: linear-gradient(#c9eff7 0 84px, #67cbe5 84px); }
.ctx { position: absolute; left: 371px; top: 319px; width: 196px; height: 21px; display: flex; align-items: center; gap: 11px; padding-left: 3px; background: rgba(84, 135, 177, .65); color: #172733; }
.ctx svg { width: 16px; height: 16px; }
.cube { position: absolute; right: 11px; top: 9px; width: 90px; display: flex; flex-direction: column; align-items: center; }
.cube svg { width: 90px; height: 90px; }
.compass { font: 700 13px "Liberation Sans", sans-serif; fill: #b4bac0; text-anchor: middle; }
.top { font: 700 8px "Liberation Sans", sans-serif; fill: #333; text-anchor: middle; }
.wcs { width: 44px; height: 16px; margin-top: 12px; line-height: 14px; border-radius: 4px; background: #83878f; border: 1px solid #a1a4ab; color: #33373d; }
.wcs span { font-size: 8px; color: #bbb; }
.navbar { position: absolute; right: 4px; top: 151px; width: 30px; height: 198px; background: #555b5f; border-radius: 3px; }
.navbar svg { width: 30px; height: 198px; }
.cmd { position: absolute; left: 311px; bottom: 1px; width: 649px; height: 24px; display: flex; align-items: center; gap: 6px; background: rgba(95, 95, 95, .85); }
.cmd > button svg { width: 12px; height: 12px; }
.grip { width: 6px; height: 16px; margin-left: 3px; background: repeating-conic-gradient(#bbb 0 25%, #555 0 50%) 0 0 / 4px 4px; }
.field { flex: 1; align-self: stretch; display: flex; align-items: center; gap: 5px; padding: 0 3px 0 5px; background: rgba(220, 220, 220, .82); }
.field svg { width: 24px; height: 14px; }
.field input { flex: 1; min-width: 0; outline: 0; font: italic 11px/14px "DejaVu Sans Mono", monospace; color: #333; }
.field input::placeholder { color: #666; opacity: 1; }
.field button { color: #111; font-size: 7px; }

.status { height: 26px; display: flex; justify-content: space-between; background: #373737; }
.layouts { display: flex; padding-left: 11px; align-items: flex-start; gap: 3px; }
.layouts button { height: 17px; min-width: 54px; padding: 0 8px; background: #505050; color: #bbb; border-radius: 0 0 9px 9px; }
.layouts .on { background: #6b6b6b; color: #fff; font-weight: 700; }
.layouts .add { min-width: 22px; padding: 0; height: 15px; font-weight: 700; font-size: 14px; line-height: 14px; color: #ddd; }
.tools { display: flex; align-items: stretch; background: #4a4a4a; border: solid #606060; border-width: 1px 0; }
.tools > * { display: flex; align-items: center; justify-content: space-evenly; flex: none; border-left: 1px solid #666; }
.tools .d { width: 8px; height: 8px; margin: 0 -1px; }
.tools .s { color: #c8c8c8; }
.tools .blue { color: #3e97f5; }
.tools span { color: #fff; }
.model { width: 46px; font-size: 12px; color: #fff; }
.tools .w62 { width: 62px; padding-right: 6px; } .w96 { width: 97px; padding-right: 2px; } .w60 { width: 60px; } .w24 { width: 24px; } .w100 { width: 100px; padding-right: 4px; } .w38 { width: 38px; } .w48 { width: 48px; }

.caption { position: absolute; left: 4px; top: 30px; font: 35px/44px "DejaVu Sans", sans-serif; color: #fff; white-space: nowrap; text-shadow: 2px 0 #000, -2px 0 #000, 0 2px #000, 0 -2px #000, 2px 2px #000, -2px -2px #000, 2px -2px #000, -2px 2px #000, 3px 4px 3px #000, 0 0 6px #000; pointer-events: none; }
.caption span { font: 32px "Open Sans", sans-serif; }
.watermark { position: absolute; left: 525px; top: 29px; font: 700 19px/18px "DejaVu Sans", sans-serif; color: #fff; white-space: nowrap; text-shadow: 1px 0 #444, -1px 0 #444, 0 1px #444, 0 -1px #444, 1px 2px 2px #333; pointer-events: none; }
```
